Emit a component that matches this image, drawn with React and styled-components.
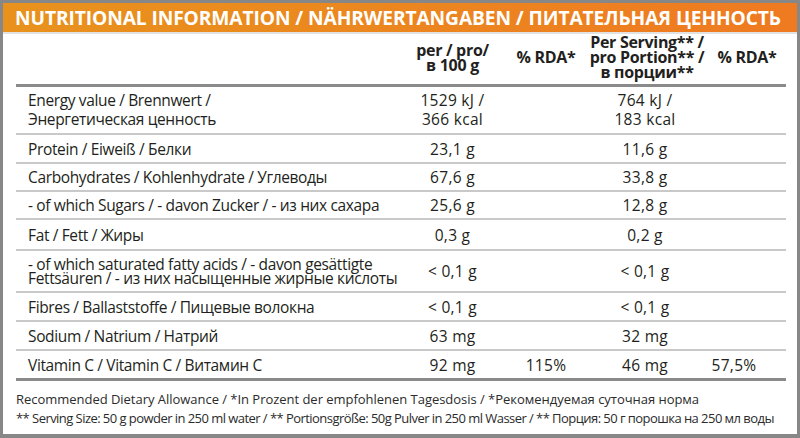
import React from "react";
import styled, { createGlobalStyle } from "styled-components";

const Global = createGlobalStyle`
  html, body { margin: 0; padding: 0; background: #fff; }
  * { box-sizing: border-box; }
`;

const Frame = styled.div`
  width: 800px;
  height: 438px;
  border: 3px solid #878787;
  border-bottom-width: 4px;
  background: #fff;
  font-family: "Open Sans", "Noto Sans", sans-serif;
  color: #231f20;
  display: flex;
  flex-direction: column;
  overflow: hidden;
`;

const Banner = styled.div`
  height: 31px;
  flex: none;
  background: linear-gradient(to right, #e8921d, #ef7a21);
  border-bottom: 2px solid #e2e2e2;
  color: #fff;
  font-weight: 700;
  font-size: 19.2px;
  letter-spacing: -0.1px;
  line-height: 29px;
  padding-left: 12px;
  white-space: nowrap;
`;

const Content = styled.div`
  padding: 0 11px 0 13px;
  display: flex;
  flex-direction: column;
`;

const cols = "389px 95px 92px 106px 88px";

const Row = styled.div`
  display: grid;
  grid-template-columns: ${cols};
  align-items: center;
  height: ${(p) => p.$h}px;
  border-bottom: ${(p) => (p.$strong ? "3px solid #8a8a8a" : "2px solid #c9c9c9")};
  font-size: 15.5px;
  line-height: ${(p) => p.$lh || 18}px;
`;

const HeadRow = styled(Row)`
  font-weight: 700;
  font-size: 16px;
  line-height: 15px;
  padding-bottom: 3px;
`;

const Label = styled.div`
  padding-left: 12px;
  white-space: nowrap;
  letter-spacing: -0.36px;
`;

const Cell = styled.div`
  display: flex;
  flex-direction: column;
  align-items: center;
  text-align: center;
  white-space: nowrap;
  letter-spacing: ${(p) => (p.$head ? "-0.3px" : "0.3px")};
  transform: translateX(${(p) => p.$dx || 0}px);
`;

const Footer = styled.div`
  padding: 9px 0 0 0;
  font-size: 13px;
  line-height: 19px;
  color: #2b2b2b;
  white-space: nowrap;
`;

const FootLine = styled.div`
  letter-spacing: ${(p) => p.$ls}px;
`;

const rows = [
  { h: 48, lh: 19, label: ["Energy value / Brennwert /", "Энергетическая ценность"], a: ["1529 kJ /", "366 kcal"], c: ["764 kJ /", "183 kcal"] },
  { h: 29, label: ["Protein / Eiweiß / Белки"], a: ["23,1 g"], c: ["11,6 g"] },
  { h: 28, label: ["Carbohydrates / Kohlenhydrate / Углеводы"], a: ["67,6 g"], c: ["33,8 g"] },
  { h: 28, label: ["- of which Sugars / - davon Zucker / - из них сахара"], a: ["25,6 g"], c: ["12,8 g"] },
  { h: 31, label: ["Fat / Fett / Жиры"], a: ["0,3 g"], c: ["0,2 g"] },
  { h: 42, lh: 14, label: ["- of which saturated fatty acids / - davon gesättigte", "Fettsäuren / - из них насыщенные жирные кислоты"], a: ["< 0,1 g"], c: ["< 0,1 g"] },
  { h: 29, label: ["Fibres / Ballaststoffe / Пищевые волокна"], a: ["< 0,1 g"], c: ["< 0,1 g"] },
  { h: 29, label: ["Sodium / Natrium / Натрий"], a: ["63 mg"], c: ["32 mg"] },
  { h: 30, strong: true, label: ["Vitamin C / Vitamin C / Витамин C"], a: ["92 mg"], b: "115%", c: ["46 mg"], d: "57,5%" },
];

const Lines = ({ items }) => items.map((t, i) => <span key={i}>{t}</span>);

export default function App() {
  return (
    <>
      <Global />
      <Frame>
        <Banner>NUTRITIONAL INFORMATION / NÄHRWERTANGABEN / ПИТАТЕЛЬНАЯ ЦЕННОСТЬ</Banner>
        <Content>
          <HeadRow $h={53} $strong>
            <div />
            <Cell $head>
              <span>per / pro/</span>
              <span>в 100 g</span>
            </Cell>
            <Cell $head>% RDA*</Cell>
            <Cell $head $dx={2}>
              <span>Per Serving** /</span>
              <span>pro Portion** /</span>
              <span>в порции**</span>
            </Cell>
            <Cell $head $dx={5}>% RDA*</Cell>
          </HeadRow>
          {rows.map((r, i) => (
            <Row key={i} $h={r.h} $lh={r.lh} $strong={r.strong}>
              <Label>
                {r.label.map((t, j) => (
                  <div key={j}>{t}</div>
                ))}
              </Label>
              <Cell>
                <Lines items={r.a} />
              </Cell>
              <Cell>{r.b || ""}</Cell>
              <Cell>
                <Lines items={r.c} />
              </Cell>
              <Cell $dx={-8}>{r.d || ""}</Cell>
            </Row>
          ))}
          <Footer>
            <FootLine $ls={-0.03}>
              Recommended Dietary Allowance / *In Prozent der empfohlenen Tagesdosis / *Рекомендуемая суточная норма
            </FootLine>
            <FootLine $ls={-0.55}>
              ** Serving Size: 50 g powder in 250 ml water / ** Portionsgröße: 50g Pulver in 250 ml Wasser / ** Порция: 50 г порошка на 250 мл воды
            </FootLine>
          </Footer>
        </Content>
      </Frame>
    </>
  );
}
